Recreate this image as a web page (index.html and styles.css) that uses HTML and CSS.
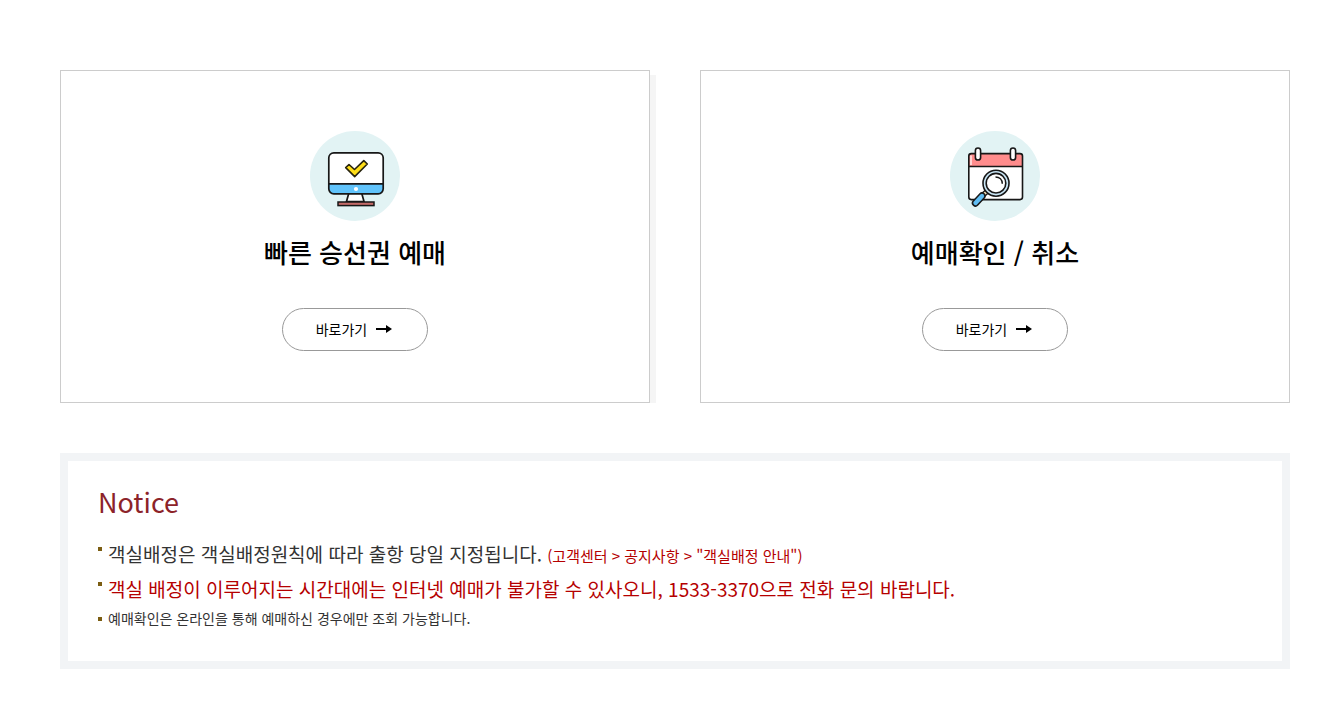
FILE: index.html
```html
<!DOCTYPE html>
<html lang="ko">
<head>
<meta charset="utf-8">
<meta name="viewport" content="width=device-width, initial-scale=1">
<title>승선권 예매</title>
<link rel="stylesheet" href="styles.css">
</head>
<body>
<main class="page">
  <div class="cards">
    <section class="card card-raised">
      <svg class="card-icon" viewBox="0 0 90 90" aria-hidden="true">
        <circle cx="45" cy="45" r="45" fill="#e2f3f4"/>
        <path d="M39 61.500L36.500 70.500H54L51.500 61.500" fill="#fff" stroke="#171717" stroke-width="1.700"/>
        <rect x="18.800" y="21.800" width="54.400" height="41" rx="5" fill="#fff"/>
        <path d="M19 52.500H73V57.800Q73 62.800 68 62.800H24Q19 62.800 19 57.800Z" fill="#60c3fb"/>
        <rect x="18.800" y="21.800" width="54.400" height="41" rx="5" fill="none" stroke="#171717" stroke-width="1.700"/>
        <path d="M19 52.800H73" stroke="#171717" stroke-width="1.700"/>
        <circle cx="46" cy="58" r="2.100" fill="#fff"/>
        <rect x="28" y="71" width="36" height="3.600" fill="#c36a68" stroke="#171717" stroke-width="1.500"/>
        <path d="M35.700 36.600L39 33.500L44.500 38.500L53.800 29.700L57.300 33L44.700 45.600Z" fill="#ffde17" stroke="#27230d" stroke-width="1.600" stroke-linejoin="round"/>
      </svg>
      <h2 class="card-title">빠른 승선권 예매</h2>
      <a class="go" href="#booking">바로가기
        <svg class="arrow" viewBox="0 0 16 10" aria-hidden="true"><path d="M0 5H11" stroke="#000" stroke-width="2"/><path d="M10 1L16 5L10 9Z"/></svg>
      </a>
    </section>
    <section class="card">
      <svg class="card-icon" viewBox="0 0 90 90" aria-hidden="true">
        <circle cx="45" cy="45" r="45" fill="#e2f3f4"/>
        <rect x="18.800" y="22.600" width="53.700" height="46" rx="2.500" fill="#fff"/>
        <path d="M19 35V25.300Q19 22.600 21.500 22.600H70Q72.500 22.600 72.500 25.300V35Z" fill="#ff8c8c"/>
        <path d="M21 34V24.500" stroke="#ffd4d4" stroke-width="2"/>
        <rect x="18.800" y="22.600" width="53.700" height="46" rx="2.500" fill="none" stroke="#171717" stroke-width="1.600"/>
        <path d="M19 35.500H72.500" stroke="#171717" stroke-width="1.500"/>
        <rect x="25.400" y="17" width="5.200" height="12" rx="2.600" fill="#fff" stroke="#171717" stroke-width="1.600"/>
        <rect x="60.400" y="17" width="5.200" height="12" rx="2.600" fill="#fff" stroke="#171717" stroke-width="1.600"/>
        <path d="M33 64L37.500 60" stroke="#171717" stroke-width="5.500"/>
        <path d="M33 64L37 60.500" stroke="#f3dfb5" stroke-width="2.800"/>
        <path d="M25.500 72L32 65" stroke="#171717" stroke-width="7.400" stroke-linecap="round"/>
        <path d="M25.500 72L32 65" stroke="#60bdf3" stroke-width="4.400" stroke-linecap="round"/>
        <circle cx="46" cy="52.200" r="13" fill="#c9e5f4" stroke="#171717" stroke-width="1.600"/>
        <circle cx="46" cy="52.200" r="9.800" fill="#fff" stroke="#171717" stroke-width="1.600"/>
        <path d="M45.500 46C49.500 46 52.300 48.800 52.300 52.800" fill="none" stroke="#171717" stroke-width="1.500"/>
      </svg>
      <h2 class="card-title">예매확인 / 취소</h2>
      <a class="go" href="#check">바로가기
        <svg class="arrow" viewBox="0 0 16 10" aria-hidden="true"><path d="M0 5H11" stroke="#000" stroke-width="2"/><path d="M10 1L16 5L10 9Z"/></svg>
      </a>
    </section>
  </div>
  <section class="notice">
    <h2 class="notice-title">Notice</h2>
    <ul class="notice-list">
      <li class="item item-large">객실배정은 객실배정원칙에 따라 출항 당일 지정됩니다. <span class="path">(고객센터 &gt; 공지사항 &gt; "객실배정 안내")</span></li>
      <li class="item item-large item-alert">객실 배정이 이루어지는 시간대에는 인터넷 예매가 불가할 수 있사오니, 1533-3370으로 전화 문의 바랍니다.</li>
      <li class="item">예매확인은 온라인을 통해 예매하신 경우에만 조회 가능합니다.</li>
    </ul>
  </section>
</main>
</body>
</html>
```
FILE: styles.css
```css
* { box-sizing: border-box; }
body {
  margin: 0;
  background: #fff;
  color: #333;
  font-family: "Noto Sans CJK KR", sans-serif;
}
.page { padding: 70px 31px 37px 60px; }
.cards {
  display: grid;
  grid-template-columns: 1fr 1fr;
  gap: 50px;
}
.card {
  position: relative;
  display: flex;
  flex-direction: column;
  align-items: center;
  padding: 60px 20px 51px;
  border: 1px solid #ccc;
}
.card-raised::after {
  content: "";
  position: absolute;
  top: 4px;
  bottom: -1px;
  left: 100%;
  width: 6px;
  border-left: 1px solid #ccc;
  background: #f5f5f5;
}
.card-icon { width: 90px; height: 90px; }
.card-title {
  margin: 11px 0 36px;
  color: #000;
  font-size: 26px;
  font-weight: 500;
  line-height: 40px;
}
.go {
  display: flex;
  align-items: center;
  gap: 9px;
  padding: 0 35px 1px 33px;
  border: 1px solid #999;
  border-radius: 22px;
  color: #000;
  font-size: 14px;
  line-height: 40px;
  text-decoration: none;
}
.arrow { width: 16px; height: 10px; }
.notice {
  margin-top: 50px;
  padding: 21px 30px 30px;
  border: 8px solid #f2f4f6;
}
.notice-title {
  margin: 0 0 14px;
  color: #8c2329;
  font-size: 27px;
  font-weight: 400;
  line-height: 40px;
}
.notice-list {
  margin: 0;
  padding: 0;
  list-style: none;
}
.item {
  position: relative;
  padding-left: 10px;
  font-size: 14px;
  font-weight: 400;
  line-height: 25px;
}
.item::before {
  content: "";
  position: absolute;
  top: 11px;
  left: 0;
  width: 4px;
  height: 4px;
  background: #7b5d12;
}
.item-large {
  font-size: 19px;
  line-height: 35px;
}
.item-alert { color: #b50000; }
.path { color: #b50000; font-size: 15px; line-height: 1; }
```
